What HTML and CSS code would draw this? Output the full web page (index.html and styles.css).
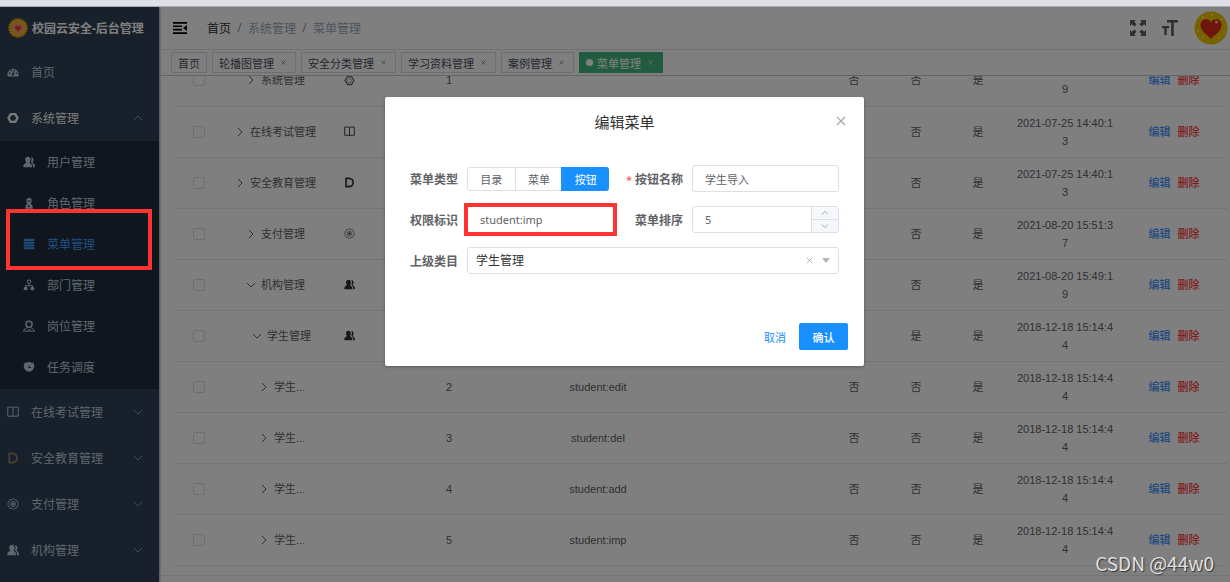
FILE: index.html
```html
<!DOCTYPE html>
<html lang="zh-CN">
<head>
<meta charset="utf-8">
<title>菜单管理</title>
<link rel="stylesheet" href="styles.css">
</head>
<body>
<svg class="sprite" aria-hidden="true">
  <symbol id="gauge" viewBox="0 0 16 16"><path fill="currentColor" fill-rule="evenodd" d="M.5 12A7.500 8.500 0 1 1 15.500 12Q15.500 14 14 14H2Q.5 14 .5 12ZM2.500 8.500h2v2h-2zM4.500 5h2v2h-2zM9.200 4.500l-1.700 5a1.700 1.700 0 1 0 1.600.5l1.300-5zM11.700 8.500h2v2h-2z"/></symbol>
  <symbol id="gear" viewBox="0 0 16 16"><path fill="none" stroke="currentColor" stroke-width="3.200" stroke-linejoin="round" d="M5 2.800h6L14 8l-3 5.200H5L2 8z"/></symbol>
  <symbol id="cog" viewBox="0 0 16 16"><path fill="none" stroke="currentColor" stroke-width="2" stroke-linejoin="round" d="M5 2.200h6L14.500 8 11 13.800H5L1.500 8z"/><circle cx="8" cy="8" r="3" fill="none" stroke="currentColor" stroke-width=".8"/></symbol>
  <symbol id="users" viewBox="0 0 16 16"><path fill="currentColor" d="M6.500 1C9 1 10 2.800 10 5c0 1.600-.7 2.700-1.300 3.500.2 1.500 3.300 1.500 3.300 4.500v2H.5v-2c0-3 3.500-3 3.700-4.500C3.500 7.700 3 6.600 3 5c0-2.200 1-4 3.500-4zM10.500 1.500C13 1.500 14 3 14 5c0 1.500-.7 2.500-1.200 3.200.2 1.800 3 1.800 3 4.300V15h-2.600v-2c0-2.500-1.200-3.700-2.700-4.800.6-.8 1-1.900 1-3.200 0-1.400-.3-2.600-1-3.500z"/></symbol>
  <symbol id="role" viewBox="0 0 16 16"><path fill="currentColor" fill-rule="evenodd" d="M4.500 3 8 .5 11.500 3v3c0 1.200-.8 2.300-1.600 2.800C12 10 13 12 13 15.500H3C3 12 4 10 6.100 8.800 5.300 8.300 4.500 7.200 4.500 6zM6 4.500h4V6H6zM7.500 10 6 14l2-1.500L10 14z"/></symbol>
  <symbol id="lines" viewBox="0 0 16 16"><path fill="currentColor" d="M1 1h14v3H1zM1 5h14v2.600H1zM1 8.700h14v2.600H1zM1 12.400h14V15H1z"/></symbol>
  <symbol id="tree" viewBox="0 0 16 16"><path fill="none" stroke="currentColor" stroke-width="1.400" d="M8 1.200a2.300 2.300 0 1 1-.1 0M8 6v3M3.500 11V9h9v2"/><rect x="1" y="10.500" width="5" height="4.500" rx="1.500" fill="currentColor"/><rect x="10" y="10.500" width="5" height="4.500" rx="1.500" fill="currentColor"/></symbol>
  <symbol id="post" viewBox="0 0 16 16"><circle cx="8" cy="5.500" r="4" fill="none" stroke="currentColor" stroke-width="2"/><path fill="none" stroke="currentColor" stroke-width="1.300" d="M6 9.500C5 12 1 11 .8 14.800h14.400C15 11 11 12 10 9.500M6 12l2 2 2-2"/></symbol>
  <symbol id="timer" viewBox="0 0 16 16"><path fill="currentColor" fill-rule="evenodd" d="M2.500 2 4.500 2.200a7 7 0 0 1 7 0l2-.2.800 2A7 7 0 1 1 1.700 4zM7.500 6v3.200h3V8H8.700V6z"/></symbol>
  <symbol id="book" viewBox="0 0 16 16"><path fill="none" stroke="currentColor" stroke-width="1.300" d="M1 1.500h6l1 1 1-1h6v12H9l-1 1-1-1H1zM8 2.500v12"/></symbol>
  <symbol id="letter" viewBox="0 0 16 16"><path fill="none" stroke="currentColor" stroke-width="2.400" d="M3 2h4c8.500 0 8.500 12 0 12H3z"/></symbol>
  <symbol id="pay" viewBox="0 0 16 16"><path fill="none" stroke="currentColor" stroke-width="1.100" d="M8 1l5 2 2 5-2 5-5 2-5-2-2-5 2-5z"/><circle cx="8" cy="8" r="3.500" fill="none" stroke="currentColor"/><circle cx="8" cy="8" r="2" fill="currentColor"/></symbol>
  <symbol id="down" viewBox="0 0 10 10"><path fill="none" stroke="currentColor" d="M1 3l4 4 4-4"/></symbol>
  <symbol id="up" viewBox="0 0 10 10"><path fill="none" stroke="currentColor" d="M1 7l4-4 4 4"/></symbol>
  <symbol id="right" viewBox="0 0 10 10"><path fill="none" stroke="currentColor" d="M3 1l4 4-4 4"/></symbol>
  <symbol id="cross" viewBox="0 0 10 10"><path fill="none" stroke="currentColor" stroke-width="1.200" d="M1 1l8 8M9 1l-8 8"/></symbol>
</svg>

<div class="chrome-strip"></div>
<div class="app">
  <aside class="sidebar">
    <div class="brand">
      <svg class="brand-logo" viewBox="0 0 20 20"><circle cx="10" cy="10" r="9" fill="#f0b414"/><circle cx="10" cy="10" r="9" fill="none" stroke="#f0b414" stroke-width="1.600" stroke-dasharray="1.600 1.200"/><circle cx="10" cy="10" r="6.500" fill="#f2a065"/><path fill="#f03c3c" d="M10 13.500 7.300 10.800Q6.200 8.500 7.900 7.700 9.300 7.200 10 8.600q.7-1.400 2.100-.9Q13.800 8.500 12.700 10.800z"/></svg>
      <span>校园云安全-后台管理</span>
    </div>
    <nav>
      <a class="item" href="#"><svg class="ico"><use href="#gauge"/></svg>首页</a>
      <a class="item open" href="#"><svg class="ico"><use href="#gear"/></svg>系统管理<svg class="arrow"><use href="#up"/></svg></a>
      <div class="submenu">
        <a class="item" href="#"><svg class="ico"><use href="#users"/></svg>用户管理</a>
        <a class="item" href="#"><svg class="ico"><use href="#role"/></svg>角色管理</a>
        <a class="item active" href="#"><svg class="ico"><use href="#lines"/></svg>菜单管理</a>
        <a class="item" href="#"><svg class="ico"><use href="#tree"/></svg>部门管理</a>
        <a class="item" href="#"><svg class="ico"><use href="#post"/></svg>岗位管理</a>
        <a class="item" href="#"><svg class="ico"><use href="#timer"/></svg>任务调度</a>
      </div>
      <a class="item" href="#"><svg class="ico"><use href="#book"/></svg>在线考试管理<svg class="arrow"><use href="#down"/></svg></a>
      <a class="item" href="#"><svg class="ico brown"><use href="#letter"/></svg>安全教育管理<svg class="arrow"><use href="#down"/></svg></a>
      <a class="item" href="#"><svg class="ico"><use href="#pay"/></svg>支付管理<svg class="arrow"><use href="#down"/></svg></a>
      <a class="item" href="#"><svg class="ico"><use href="#users"/></svg>机构管理<svg class="arrow"><use href="#down"/></svg></a>
    </nav>
  </aside>

  <main class="main">
    <header class="navbar">
      <svg class="fold" viewBox="0 0 14 12"><path fill="#000" d="M0 0h14v1.800H0zM0 3.400h9v1.600H0zM0 6.800h9v1.600H0zM0 10.200h14V12H0zM14 3v6L10 6z"/></svg>
      <nav class="crumbs"><a href="#">首页</a><i>/</i><span>系统管理</span><i>/</i><span>菜单管理</span></nav>
      <div class="tools">
        <svg class="tool" viewBox="0 0 16 16"><path fill="currentColor" d="M0 0h6L4.200 1.800 6.600 4.200 4.400 6.400 1.800 4.200 0 6zM16 0v6l-1.800-1.800L11.600 6.400 9.400 4.200l2.400-2.400L10 0zM0 16v-6l1.800 1.800L4.400 9.600l2.200 2.200-2.400 2.400L6 16zM16 16h-6l1.800-1.800-2.400-2.400 2.200-2.200 2.600 2.200L16 10z"/></svg>
        <svg class="tool" viewBox="0 0 16 16"><path fill="currentColor" d="M5 0h11v2.500h-4.200V16H9.200V2.500H5zM0 6h7v2.200H4.700V15H2.300V8.200H0z"/></svg>
        <svg class="avatar" viewBox="0 0 34 34"><circle cx="17" cy="17" r="16.500" fill="#f0c400"/><g fill="#fff28a"><circle cx="9" cy="6" r="1"/><circle cx="18" cy="4" r="1"/><circle cx="28" cy="8" r="1"/><circle cx="4" cy="20" r="1"/><circle cx="9" cy="26" r="1"/><circle cx="30" cy="21" r="1"/><circle cx="25" cy="27" r="1"/></g><path fill="#e0281c" d="M17 27.500C13 24 6.500 20 6.500 14c0-7 9-7.500 10.500-2.500C18.500 6.500 27.500 7 27.500 14c0 6-6.500 10-10.500 13.500z"/><circle cx="22.500" cy="11" r="1.500" fill="#ffc0b8"/></svg>
      </div>
    </header>
    <div class="tags">
      <a class="tag" href="#">首页</a>
      <a class="tag" href="#">轮播图管理<svg><use href="#cross"/></svg></a>
      <a class="tag" href="#">安全分类管理<svg><use href="#cross"/></svg></a>
      <a class="tag" href="#">学习资料管理<svg><use href="#cross"/></svg></a>
      <a class="tag" href="#">案例管理<svg><use href="#cross"/></svg></a>
      <a class="tag current" href="#"><b></b>菜单管理<svg><use href="#cross"/></svg></a>
    </div>
    <div class="scroll">
      <table class="grid">
        <colgroup><col class="c-check"><col class="c-name"><col class="c-flag"><col class="c-sort"><col class="c-perm"><col><col class="c-flag"><col class="c-flag"><col class="c-flag"><col class="c-date"><col class="c-ops"></colgroup>
        <tbody>
          <tr><td><input type="checkbox" aria-label="系统管理"></td><td class="name l2"><svg><use href="#right"/></svg>系统管理</td><td><svg class="ico soft"><use href="#cog"/></svg></td><td>1</td><td></td><td></td><td>否</td><td>否</td><td>是</td><td class="date">2021-08-20 15:49:19</td><td class="ops"><a href="#">编辑</a><a class="del" href="#">删除</a></td></tr>
          <tr><td><input type="checkbox" aria-label="在线考试管理"></td><td class="name l1"><svg><use href="#right"/></svg>在线考试管理</td><td><svg class="ico"><use href="#book"/></svg></td><td></td><td></td><td></td><td>否</td><td>否</td><td>是</td><td class="date">2021-07-25 14:40:13</td><td class="ops"><a href="#">编辑</a><a class="del" href="#">删除</a></td></tr>
          <tr><td><input type="checkbox" aria-label="安全教育管理"></td><td class="name l1"><svg><use href="#right"/></svg>安全教育管理</td><td><svg class="ico"><use href="#letter"/></svg></td><td></td><td></td><td></td><td>否</td><td>否</td><td>是</td><td class="date">2021-07-25 14:40:13</td><td class="ops"><a href="#">编辑</a><a class="del" href="#">删除</a></td></tr>
          <tr><td><input type="checkbox" aria-label="支付管理"></td><td class="name l2"><svg><use href="#right"/></svg>支付管理</td><td><svg class="ico soft"><use href="#pay"/></svg></td><td></td><td></td><td></td><td>否</td><td>否</td><td>是</td><td class="date">2021-08-20 15:51:37</td><td class="ops"><a href="#">编辑</a><a class="del" href="#">删除</a></td></tr>
          <tr><td><input type="checkbox" aria-label="机构管理"></td><td class="name l2"><svg><use href="#down"/></svg>机构管理</td><td><svg class="ico"><use href="#users"/></svg></td><td></td><td></td><td></td><td>否</td><td>否</td><td>是</td><td class="date">2021-08-20 15:49:19</td><td class="ops"><a href="#">编辑</a><a class="del" href="#">删除</a></td></tr>
          <tr><td><input type="checkbox" aria-label="学生管理"></td><td class="name l3"><svg><use href="#down"/></svg>学生管理</td><td><svg class="ico"><use href="#users"/></svg></td><td></td><td></td><td></td><td>否</td><td>是</td><td>是</td><td class="date">2018-12-18 15:14:44</td><td class="ops"><a href="#">编辑</a><a class="del" href="#">删除</a></td></tr>
          <tr><td><input type="checkbox" aria-label="学生"></td><td class="name l4"><svg><use href="#right"/></svg>学生...</td><td></td><td>2</td><td>student:edit</td><td></td><td>否</td><td>否</td><td>是</td><td class="date">2018-12-18 15:14:44</td><td class="ops"><a href="#">编辑</a><a class="del" href="#">删除</a></td></tr>
          <tr><td><input type="checkbox" aria-label="学生"></td><td class="name l4"><svg><use href="#right"/></svg>学生...</td><td></td><td>3</td><td>student:del</td><td></td><td>否</td><td>否</td><td>是</td><td class="date">2018-12-18 15:14:44</td><td class="ops"><a href="#">编辑</a><a class="del" href="#">删除</a></td></tr>
          <tr><td><input type="checkbox" aria-label="学生"></td><td class="name l4"><svg><use href="#right"/></svg>学生...</td><td></td><td>4</td><td>student:add</td><td></td><td>否</td><td>否</td><td>是</td><td class="date">2018-12-18 15:14:44</td><td class="ops"><a href="#">编辑</a><a class="del" href="#">删除</a></td></tr>
          <tr><td><input type="checkbox" aria-label="学生"></td><td class="name l4"><svg><use href="#right"/></svg>学生...</td><td></td><td>5</td><td>student:imp</td><td></td><td>否</td><td>否</td><td>是</td><td class="date">2018-12-18 15:14:44</td><td class="ops"><a href="#">编辑</a><a class="del" href="#">删除</a></td></tr>
        </tbody>
      </table>
      <div class="table-end"></div>
    </div>
  </main>

  <div class="overlay">
    <form class="dialog" role="dialog" aria-labelledby="dlg-title">
      <div class="dlg-head">
        <h2 id="dlg-title">编辑菜单</h2>
        <button type="button" class="close" aria-label="关闭"><svg><use href="#cross"/></svg></button>
      </div>
      <div class="fields">
        <span class="label" id="type-label">菜单类型</span>
        <div class="segments" role="radiogroup" aria-labelledby="type-label">
          <label><input type="radio" name="type">目录</label><label><input type="radio" name="type">菜单</label><label><input type="radio" name="type" checked>按钮</label>
        </div>
        <label class="label required" for="btn-name">按钮名称</label>
        <input class="box" id="btn-name" type="text" value="学生导入">
        <label class="label" for="perm">权限标识</label>
        <div class="marked"><input class="box perm" id="perm" type="text" value="student:imp"></div>
        <label class="label" for="order">菜单排序</label>
        <div class="stepper">
          <input id="order" type="text" inputmode="numeric" value="5">
          <div class="steps"><button type="button" aria-label="增加"><svg><use href="#up"/></svg></button><button type="button" aria-label="减少"><svg><use href="#down"/></svg></button></div>
        </div>
        <label class="label" for="parent">上级类目</label>
        <div class="picker">
          <select id="parent"><option>学生管理</option></select>
          <div class="picker-icons"><svg class="clear"><use href="#cross"/></svg><svg class="caret" viewBox="0 0 10 6"><path fill="currentColor" d="M0 0h10L5 6z"/></svg></div>
        </div>
      </div>
      <div class="dlg-foot">
        <button type="button" class="cancel">取消</button>
        <button type="button" class="confirm">确认</button>
      </div>
    </form>
  </div>
  <div class="menu-mark"></div>
  <div class="watermark">CSDN @44w0</div>
</div>
</body>
</html>
```
FILE: styles.css
```css
* { box-sizing: border-box; }
body {
  margin: 0;
  height: 100vh;
  display: flex;
  flex-direction: column;
  overflow: hidden;
  font-family: "Noto Sans", "Noto Sans CJK SC", sans-serif;
  font-size: 12px;
  color: #606266;
}
a { color: inherit; text-decoration: none; }
button, input, select { font: inherit; color: inherit; }
button { padding: 0; border: 0; background: none; }
.sprite { display: none; }
.chrome-strip { flex: 0 0 7px; background: #dfe0e7; border-bottom: 1px solid #a9a9ae; }
.app { position: relative; flex: 1; min-height: 0; display: flex; overflow: hidden; background: #fff; }

/* sidebar */
.sidebar { flex: 0 0 159px; background: #304156; color: #bfcbd9; overflow: hidden; box-shadow: 1px 0 2px rgba(0,0,0,.4); }
.brand { height: 42px; padding-left: 8px; display: flex; align-items: center; gap: 4px; color: #fff; font-weight: 700; white-space: nowrap; }
.brand-logo { width: 20px; height: 20px; flex: none; }
.item { height: 46px; padding: 0 16px 0 7px; display: flex; align-items: center; }
.ico { width: 12px; height: 12px; }
.item .ico { margin-right: 12px; flex: none; }
.item.open { color: #f4f4f5; }
.arrow { width: 10px; height: 10px; margin-left: auto; color: #909399; }
.submenu { padding-bottom: 2px; background: #1f2d3d; }
.submenu .item { height: 41px; padding-left: 23px; }
.submenu .active { color: #409eff; }
.brown { color: #8c7a6b; }

/* header */
.main { flex: 1; min-width: 0; display: flex; flex-direction: column; }
.navbar { flex: 0 0 43px; padding: 0 2px 0 14px; display: flex; align-items: center; border-bottom: 1px solid #e4e5e8; }
.fold { width: 14px; height: 12px; margin-right: 20px; }
.crumbs { display: flex; }
.crumbs a { color: #303133; }
.crumbs i { width: 17px; text-align: center; font-style: normal; color: #909399; }
.crumbs span { color: #97a8be; }
.tools { margin-left: auto; display: flex; align-items: center; gap: 16px; color: #5a5e66; }
.tool { width: 16px; height: 16px; }
.avatar { width: 34px; height: 34px; }
.tags { flex: 0 0 26px; padding: 2px 12px; display: flex; gap: 5px; border-bottom: 1px solid #c8cad0; }
.tag { height: 21px; padding: 0 6px; display: flex; align-items: center; border: 1px solid #d8dce5; color: #495060; font-size: 11px; }
.tag svg { width: 5px; height: 5px; margin: 0 3px 0 7px; }
.tag b { width: 7px; height: 7px; margin-right: 4px; border-radius: 50%; background: #fff; }
.tag.current { background: #42b983; border-color: #42b983; color: #fff; }

/* table */
.scroll { flex: 1; min-height: 0; overflow: hidden; }
.grid { width: calc(100% - 20px); margin: -21px 3px 0 17px; table-layout: fixed; border-collapse: collapse; font-family: "Liberation Sans", "Noto Sans CJK SC", sans-serif; font-size: 11px; }
.c-check { width: 45px; }
.c-name { width: 97px; }
.c-flag { width: 62px; }
.c-sort { width: 138px; }
.c-perm { width: 160px; }
.c-date { width: 112px; }
.c-ops { width: 106px; }
.grid td { height: 51px; padding: 0; text-align: center; line-height: 18px; border-bottom: 1px solid #e6e8ec; }
.grid input { appearance: none; display: block; width: 12px; height: 12px; margin: 0 auto; border: 1px solid #dcdfe6; border-radius: 2px; background: #fff; }
.grid .ico { display: block; margin: 0 auto; width: 11px; height: 11px; color: #303133; }
.grid .soft { color: #606266; }
.grid .name { text-align: left; white-space: nowrap; }
.name svg { width: 10px; height: 10px; margin-right: 5px; vertical-align: -1px; color: #606266; }
.grid .l1 { padding-left: 14px; }
.grid .l2 { padding-left: 25px; }
.grid .l3 { padding-left: 31px; }
.grid .l4 { padding-left: 38px; }
.grid .date { padding: 0 7px; word-break: break-all; }
.ops a { color: #3c94ff; font-weight: 500; }
.ops .del { margin-left: 7px; color: #ff3c3c; }
.table-end { height: 10px; border-bottom: 1px solid #e6e8ec; }

/* dialog */
.overlay { position: absolute; inset: 0; padding: 90px 0 0 19px; background: rgba(0,0,0,.5); }
.dialog { width: 479px; margin: 0 auto; background: #fff; border-radius: 2px; box-shadow: 0 1px 3px rgba(0,0,0,.3); }
.dlg-head { height: 68px; padding: 15px 18px 0; display: grid; grid-template-columns: 10px 1fr 10px; align-items: start; }
.dlg-head h2 { grid-column: 2; margin: 0; font-size: 15px; line-height: 20px; font-weight: 400; text-align: center; color: #303133; }
.close { height: 18px; color: #a4a7ad; }
.close svg { display: block; width: 10px; height: 10px; }
.fields { padding: 0 25px; display: grid; grid-template-columns: 48px 148px 1fr 147px; column-gap: 9px; row-gap: 14px; align-items: center; }
.label { font-weight: 700; text-align: right; white-space: nowrap; }
.required::before { content: "*"; margin-right: 3px; color: #ff4949; font-size: 11px; font-weight: 400; }
.box, .stepper, .picker { width: 100%; height: 27px; border: 1px solid #dcdfe6; border-radius: 3px; background: #fff; outline: 0; }
.box { padding: 0 12px; font-size: 11px; }
.segments { display: flex; width: 142px; height: 24px; border: 1px solid #dcdfe6; border-radius: 3px; font-size: 11px; }
.segments label { flex: 1; display: flex; align-items: center; justify-content: center; border-left: 1px solid #dcdfe6; }
.segments label:first-child { border-left: 0; }
.segments input { appearance: none; position: absolute; margin: 0; }
.segments label:has(:checked) { margin: -1px; background: #1890ff; border-color: #1890ff; color: #fff; border-radius: 0 3px 3px 0; }
.marked { position: relative; height: 27px; }
.marked::after { content: ""; position: absolute; inset: -3px -2px -3px -3px; border: 4px solid #ff3333; pointer-events: none; }
.perm { font-size: 11px; }
.stepper { display: flex; overflow: hidden; }
.stepper input { flex: 1; min-width: 0; padding: 0 12px; border: 0; background: none; font-size: 11px; outline: 0; }
.steps { width: 27px; display: flex; flex-direction: column; background: #f5f7fa; border-left: 1px solid #dcdfe6; color: #909399; }
.steps button { flex: 1; display: flex; align-items: center; justify-content: center; }
.steps button + button { border-top: 1px solid #dcdfe6; }
.steps svg { width: 8px; height: 8px; }
.picker { grid-column: 2 / 5; position: relative; }
.picker select { appearance: none; width: 100%; height: 100%; padding: 0 8px; border: 0; background: none; color: #303133; }
.picker-icons { position: absolute; inset: 0 8px 0 auto; display: flex; align-items: center; gap: 9px; color: #b4b7bd; pointer-events: none; }
.clear { width: 7px; height: 7px; stroke-width: 2px; color: #a4a7ad; }
.caret { width: 8px; height: 5px; }
.dlg-foot { padding: 49px 16px 16px; display: flex; justify-content: flex-end; gap: 13px; font-size: 11px; }
.cancel { color: #1890ff; }
.confirm { width: 49px; height: 27px; border-radius: 2px; background: #1890ff; color: #fff; font-weight: 500; }

/* annotations */
.menu-mark { position: absolute; left: 6px; top: 202px; width: 146px; height: 61px; border: 4px solid #ff3333; }
.watermark { position: absolute; right: 16px; bottom: 5px; font-size: 19px; line-height: 28px; color: #e0e0e0; text-shadow: 1px 1px 1px #333; font-family: "Noto Sans CJK SC", sans-serif; }
```
